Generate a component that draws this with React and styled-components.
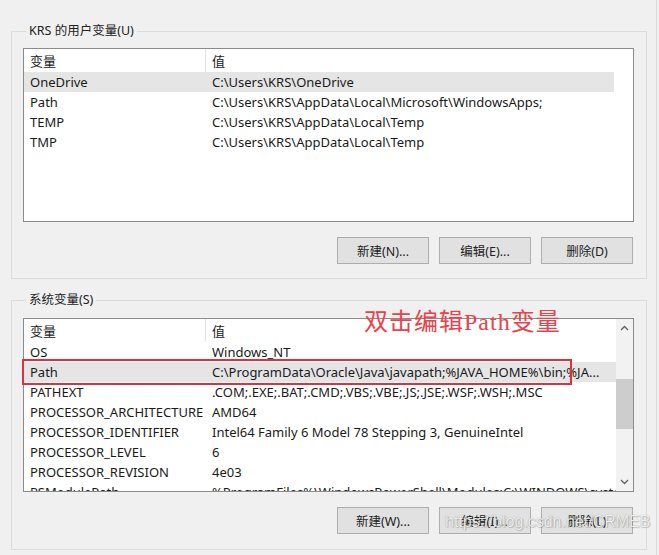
import React from "react";
import styled, { createGlobalStyle } from "styled-components";

const GlobalStyle = createGlobalStyle`
  body {
    margin: 0;
    background: #f0f0f0;
    font-family: "Noto Sans", "Noto Sans CJK SC", sans-serif;
    font-size: 13px;
    color: #1a1a1a;
  }
`;

const Window = styled.div`
  position: relative;
  height: 555px;
  padding: 22px 9px 0 11px;
  box-sizing: border-box;
  width: 657px;
  border-right: 1px solid #dadada;
  overflow: hidden;
`;

const Group = styled.fieldset`
  margin: ${(p) => (p.$second ? "12px" : "0")} 0 0 0;
  padding: ${(p) => (p.$second ? "9px" : "8px")} 12px ${(p) => (p.$second ? "15px" : "14px")} 11px;
  border: 1px solid #dcdcdc;
  min-width: 0;
`;

const Legend = styled.legend`
  padding: 0 3px;
  margin-left: 3px;
  line-height: 18px;
  font-size: 12.5px;
  color: #222;
`;

const List = styled.div`
  position: relative;
  height: 172px;
  border: 1px solid #8c8c8c;
  background: #fff;
  display: flex;
  overflow: hidden;
`;

const Columns = styled.div`
  width: ${(p) => p.$width}px;
  display: flex;
  flex-direction: column;
`;

const Header = styled.div`
  display: grid;
  grid-template-columns: 182px 1fr;
  height: 23px;
  flex-shrink: 0;
`;

const HeadCell = styled.div`
  display: flex;
  align-items: center;
  padding-left: 6px;
  border-right: ${(p) => (p.$divider ? "1px solid #e5e5e5" : "none")};
`;

const Row = styled.div`
  display: grid;
  grid-template-columns: 182px 1fr;
  height: 20px;
  flex-shrink: 0;
  align-items: center;
  background: ${(p) => (p.$selected ? "#e5e5e5" : "transparent")};
  white-space: nowrap;
`;

const Cell = styled.div`
  padding-left: 6px;
  overflow: hidden;
`;

const ScrollBar = styled.div`
  width: 17px;
  margin-left: auto;
  background: #f2f2f2;
  display: flex;
  flex-direction: column;
  align-items: center;
`;

const Arrow = styled.div`
  height: 18px;
  display: flex;
  align-items: center;
  justify-content: center;
`;

const Track = styled.div`
  flex: 1;
  width: 100%;
  padding-top: 42px;
`;

const Thumb = styled.div`
  width: 100%;
  height: 50px;
  background: #cdcdcd;
`;

const Buttons = styled.div`
  display: flex;
  justify-content: flex-end;
  gap: 10px;
  padding-right: 1px;
  margin-top: 15px;
`;

const Button = styled.button`
  width: 92px;
  height: 27px;
  background: #e1e1e1;
  border: 1px solid #adadad;
  font-family: "Noto Sans", "Noto Sans CJK SC", sans-serif;
  font-size: 12.5px;
  color: #222;
  padding: 0;
`;

const Note = styled.div`
  position: absolute;
  left: 364px;
  top: 309px;
  font-family: "Liberation Serif", "Noto Sans CJK SC", serif;
  font-size: 24px;
  line-height: 26px;
  color: #e8424c;
  letter-spacing: 1px;
`;

const Mark = styled.div`
  position: absolute;
  left: 22px;
  top: 359px;
  width: 550px;
  height: 26px;
  box-sizing: border-box;
  border: 2px solid #e0303c;
`;

const Watermark = styled.div`
  position: absolute;
  left: 445px;
  top: 513px;
  font-family: "Liberation Sans", sans-serif;
  font-size: 16px;
  color: rgba(255, 255, 255, 0.85);
  text-shadow: 0 0 1px rgba(0, 0, 0, 0.4), 1px 1px 1px rgba(0, 0, 0, 0.15);
`;

const Chevron = ({ up }) => (
  <svg width="9" height="6" viewBox="0 0 9 6">
    <polyline
      points={up ? "1,5 4.5,1.5 8,5" : "1,1 4.5,4.5 8,1"}
      fill="none"
      stroke="#606060"
      strokeWidth="1.3"
    />
  </svg>
);

const userVars = [
  ["OneDrive", "C:\\Users\\KRS\\OneDrive", true],
  ["Path", "C:\\Users\\KRS\\AppData\\Local\\Microsoft\\WindowsApps;"],
  ["TEMP", "C:\\Users\\KRS\\AppData\\Local\\Temp"],
  ["TMP", "C:\\Users\\KRS\\AppData\\Local\\Temp"],
];

const sysVars = [
  ["OS", "Windows_NT"],
  ["Path", "C:\\ProgramData\\Oracle\\Java\\javapath;%JAVA_HOME%\\bin;%JA...", true],
  ["PATHEXT", ".COM;.EXE;.BAT;.CMD;.VBS;.VBE;.JS;.JSE;.WSF;.WSH;.MSC"],
  ["PROCESSOR_ARCHITECTURE", "AMD64"],
  ["PROCESSOR_IDENTIFIER", "Intel64 Family 6 Model 78 Stepping 3, GenuineIntel"],
  ["PROCESSOR_LEVEL", "6"],
  ["PROCESSOR_REVISION", "4e03"],
  ["PSModulePath", "%ProgramFiles%\\WindowsPowerShell\\Modules;C:\\WINDOWS\\system32"],
];

const VarList = ({ rows, width, scroll }) => (
  <List>
    <Columns $width={width}>
      <Header>
        <HeadCell $divider>变量</HeadCell>
        <HeadCell>值</HeadCell>
      </Header>
      {rows.map(([name, value, selected]) => (
        <Row key={name} $selected={selected}>
          <Cell>{name}</Cell>
          <Cell>{value}</Cell>
        </Row>
      ))}
    </Columns>
    {scroll && (
      <ScrollBar>
        <Arrow>
          <Chevron up />
        </Arrow>
        <Track>
          <Thumb />
        </Track>
        <Arrow>
          <Chevron />
        </Arrow>
      </ScrollBar>
    )}
  </List>
);

export default function App() {
  return (
    <>
      <GlobalStyle />
      <Window>
        <Group>
          <Legend>KRS 的用户变量(U)</Legend>
          <VarList rows={userVars} width={590} />
          <Buttons>
            <Button>新建(N)...</Button>
            <Button>编辑(E)...</Button>
            <Button>删除(D)</Button>
          </Buttons>
        </Group>
        <Group $second>
          <Legend>系统变量(S)</Legend>
          <VarList rows={sysVars} width={592} scroll />
          <Buttons>
            <Button>新建(W)...</Button>
            <Button>编辑(I)...</Button>
            <Button>删除(L)</Button>
          </Buttons>
        </Group>
        <Note>双击编辑Path变量</Note>
        <Mark />
        <Watermark>https://blog.csdn.net/CRMEB</Watermark>
      </Window>
    </>
  );
}
